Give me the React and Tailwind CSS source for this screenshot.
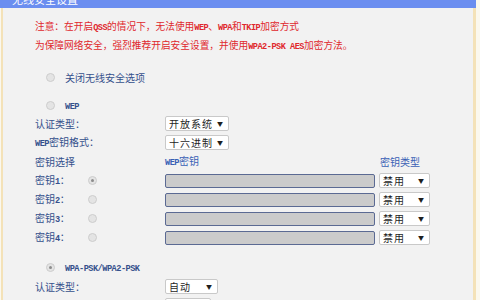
import React from "react";

function L({ children }) {
  return (
    <span className="font-['Liberation_Mono',monospace] text-[8.6px] font-bold tracking-[-0.5px]">
      {children}
    </span>
  );
}

function Radio({ checked }) {
  return (
    <span className="flex h-[9px] w-[9px] shrink-0 items-center justify-center rounded-full border border-[#cdcdcd] bg-[#e4e4e4]">
      {checked && <span className="h-[3px] w-[3px] rounded-full bg-[#8c8c8c]" />}
    </span>
  );
}

function Sel({ text, className }) {
  return (
    <div
      className={
        "flex h-[15px] items-center justify-between rounded-[2px] border border-[#c9c9c9] bg-white pl-[3px] pr-[5px] text-[10px] leading-none text-[#1e1e1e] " +
        className
      }
    >
      <span className="tracking-[1px]">{text}</span>
      <span className="text-[6px]">▼</span>
    </div>
  );
}

function KeyRow({ n, checked }) {
  return (
    <div className="flex h-[19px] items-center">
      <div className="w-[53px]">
        密钥<L>{n}</L>：
      </div>
      <Radio checked={checked} />
      <div className="ml-[68px] h-[14px] w-[210px] rounded-[2px] border border-[#5b6a93] bg-[#cbcbcb]" />
      <Sel text="禁用" className="ml-[4px] w-[51px]" />
    </div>
  );
}

export default function App() {
  return (
    <div className="flex h-[300px] w-[480px] flex-col overflow-hidden bg-[#fbf8ee] font-['Noto_Sans_CJK_SC','Noto_Sans',sans-serif] text-[10px] text-[#35508c]">
      <div className="h-[8px] w-[476px] shrink-0 overflow-hidden bg-[#6b8ef0] pl-[12px]">
        <div className="-mt-[7px] text-[11px] leading-[13px] text-white">无线安全设置</div>
      </div>
      <div className="ml-[1px] w-[475px] flex-1 border-l-2 border-r-[3px] border-[#f4e2b8] bg-[#f2f2f2] pl-[32px]">
        <div className="mt-[10px] text-[9.7px] leading-[17px] text-[#e0282d]">
          <div>
            注意：在开启<L>QSS</L>的情况下，无法使用<L>WEP</L>、<L>WPA</L>和<L>TKIP</L>加密方式
          </div>
          <div>
            为保障网络安全，强烈推荐开启安全设置，并使用<L>WPA2-PSK AES</L>加密方法。
          </div>
        </div>
        <div className="mt-[12px] flex h-[19px] items-center pl-[11px]">
          <Radio />
          <span className="ml-[10px]">关闭无线安全选项</span>
        </div>
        <div className="mt-[9px] flex h-[18px] items-center pl-[11px]">
          <Radio />
          <span className="ml-[10px]">
            <L>WEP</L>
          </span>
        </div>
        <div className="flex h-[19px] items-center">
          <div className="w-[130px]">认证类型：</div>
          <Sel text="开放系统" className="w-[64px]" />
        </div>
        <div className="flex h-[19px] items-center">
          <div className="w-[130px]">
            <L>WEP</L>密钥格式：
          </div>
          <Sel text="十六进制" className="w-[64px]" />
        </div>
        <div className="flex h-[19px] items-center">
          <div className="w-[130px]">密钥选择</div>
          <div className="w-[215px] text-[#3a5fb5]">
            <L>WEP</L>密钥
          </div>
          <div className="text-[#3a5fb5]">密钥类型</div>
        </div>
        <KeyRow n="1" checked />
        <KeyRow n="2" />
        <KeyRow n="3" />
        <KeyRow n="4" />
        <div className="mt-[11px] flex h-[19px] items-center pl-[11px]">
          <Radio checked />
          <span className="ml-[10px]">
            <L>WPA-PSK/WPA2-PSK</L>
          </span>
        </div>
        <div className="flex h-[19px] items-center">
          <div className="w-[130px]">认证类型：</div>
          <Sel text="自动" className="w-[53px]" />
        </div>
        <div className="flex h-[19px] items-center">
          <div className="w-[130px]">加密算法：</div>
          <Sel text="自动" className="w-[46px]" />
        </div>
      </div>
    </div>
  );
}
